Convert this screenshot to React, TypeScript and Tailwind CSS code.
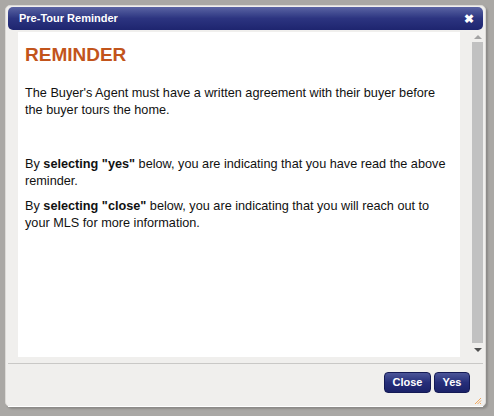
import React from 'react';

function NavyButton({ label, width }: { label: string; width: string }) {
  return (
    <button
      className={`${width} h-[21px] rounded-[4px] border border-[#141a55] bg-gradient-to-b from-[#4c5598] via-[#262e7a] to-[#1b2268] text-white text-[11px] font-bold leading-none`}
    >
      {label}
    </button>
  );
}

export default function App() {
  return (
    <div className="w-[494px] h-[416px] bg-[#aaa8a5] pt-[5px] pl-[5px] font-['Liberation_Sans',Arial,sans-serif]">
      <div className="w-[481px] h-[402px] bg-[#f0efed] rounded-[5px] border border-[#dcdad7] shadow-[2px_2px_2px_rgba(0,0,0,0.18)] flex flex-col px-[2px] pt-[1px]">
        {/* Title bar */}
        <div className="h-[23px] rounded-[5px] bg-gradient-to-b from-[#5b64a3] via-[#2c3480] to-[#1e256f] flex items-center justify-between pl-[11px] pr-[9px]">
          <span className="text-white text-[11px] font-bold">Pre-Tour Reminder</span>
          <span className="text-white text-[12px] font-bold leading-none">✖</span>
        </div>

        {/* Body */}
        <div className="flex h-[325px] mt-[2px] pl-[10px]">
          <div className="w-[442px] bg-white px-[7px] pt-[12px] text-[12.7px] leading-[17px] text-[#111]">
            <h2 className="text-[19px] font-bold text-[#c2541b] leading-[22px]">REMINDER</h2>
            <p className="mt-[19px]">
              The Buyer's Agent must have a written agreement with their buyer before the buyer tours the home.
            </p>
            <p className="mt-[9px]">&nbsp;</p>
            <p className="mt-[11px]">
              By <b>selecting "yes"</b> below, you are indicating that you have read the above reminder.
            </p>
            <p className="mt-[8px]">
              By <b>selecting "close"</b> below, you are indicating that you will reach out to your MLS for more information.
            </p>
          </div>
          <div className="ml-[12px] w-[11px] flex flex-col items-center">
            <div className="h-[9px] flex items-center justify-center">
              <div className="w-0 h-0 border-l-[4px] border-r-[4px] border-b-[4px] border-l-transparent border-r-transparent border-b-[#a3a3a3]" />
            </div>
            <div className="w-[11px] flex-1 bg-[#c1c1c1] mt-[1px] mb-[2px]" />
            <div className="h-[12px] flex items-start justify-center pt-[3px]">
              <div className="w-0 h-0 border-l-[4px] border-r-[4px] border-t-[4px] border-l-transparent border-r-transparent border-t-[#505050]" />
            </div>
          </div>
        </div>

        {/* Footer */}
        <div className="mt-[6px] border-t border-[#c9c8c6] shadow-[0_1px_0_#ffffff] flex-1 flex flex-col">
          <div className="flex justify-end gap-[3px] pr-[13px] pt-[8px]">
            <NavyButton label="Close" width="w-[47px]" />
            <NavyButton label="Yes" width="w-[36px]" />
          </div>
          <div className="flex-1 flex items-end justify-end pr-[1px] pb-[1px]">
            <svg width="8" height="8" viewBox="0 0 8 8">
              <path d="M7 1 L1 7 M7 3.5 L3.5 7 M7 6 L6 7" stroke="#f0a860" strokeWidth="1" />
            </svg>
          </div>
        </div>
      </div>
    </div>
  );
}
